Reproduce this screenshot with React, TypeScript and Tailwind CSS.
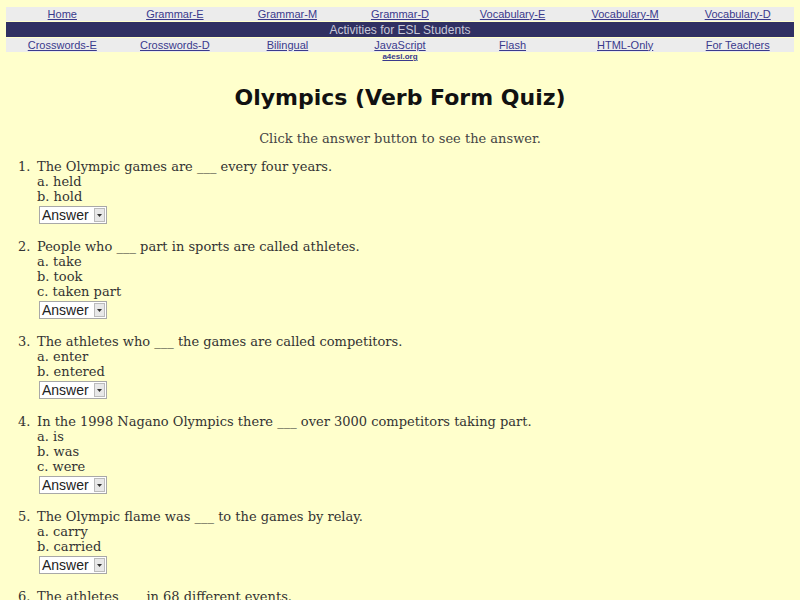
const topLinks = [
  "Home",
  "Grammar-E",
  "Grammar-M",
  "Grammar-D",
  "Vocabulary-E",
  "Vocabulary-M",
  "Vocabulary-D",
];

const bottomLinks = [
  "Crosswords-E",
  "Crosswords-D",
  "Bilingual",
  "JavaScript",
  "Flash",
  "HTML-Only",
  "For Teachers",
];

const questions = [
  { q: "The Olympic games are ___ every four years.", a: ["held", "hold"] },
  {
    q: "People who ___ part in sports are called athletes.",
    a: ["take", "took", "taken part"],
  },
  { q: "The athletes who ___ the games are called competitors.", a: ["enter", "entered"] },
  {
    q: "In the 1998 Nagano Olympics there ___ over 3000 competitors taking part.",
    a: ["is", "was", "were"],
  },
  { q: "The Olympic flame was ___ to the games by relay.", a: ["carry", "carried"] },
  { q: "The athletes ___ in 68 different events.", a: ["compete", "competed"] },
];

const letters = ["a", "b", "c", "d"];

const AnswerSelect = () => (
  <div className="flex h-[18px] w-[68px] items-center border border-[#a8a8a8] bg-white pl-[2px] text-[14px] leading-none text-[#222] [font-family:'Liberation_Sans',Arial,sans-serif]">
    <span className="flex-1">Answer</span>
    <span className="mr-[1px] flex h-[14px] w-[11px] items-center justify-center border border-[#bbb] bg-[#e8e8e8]">
      <svg width="5" height="3" viewBox="0 0 5 3">
        <path d="M0 0h5L2.5 3z" fill="#333" />
      </svg>
    </span>
  </div>
);

export default function App() {
  return (
    <div className="min-h-screen bg-[#ffffcc] pt-[7px] text-[#333] [font-family:'DejaVu_Serif',serif]">
      {/* Navigation */}
      <div className="mx-[6px] [font-family:'Liberation_Sans',Arial,sans-serif]">
        <div className="grid h-[14px] grid-cols-7 items-center bg-[#ececec]">
          {topLinks.map((l) => (
            <a key={l} className="text-center text-[11px] leading-none text-[#3a3a8c] underline">
              {l}
            </a>
          ))}
        </div>
        <div className="mt-[1px] flex h-[15px] items-center justify-center bg-[#303062] text-[12px] leading-none text-[#c8c8d8]">
          Activities for ESL Students
        </div>
        <div className="mt-[1px] grid h-[14px] grid-cols-7 items-center bg-[#ececec]">
          {bottomLinks.map((l) => (
            <a key={l} className="text-center text-[11px] leading-none text-[#3a3a8c] underline">
              {l}
            </a>
          ))}
        </div>
        <div className="grid grid-cols-7">
          <div className="col-start-4 pt-[1px] text-center text-[8px] font-bold leading-none text-[#3a3a8c] underline">
            a4esl.org
          </div>
        </div>
      </div>

      {/* Title */}
      <h1 className="mt-[26px] text-center text-[22px] font-bold leading-none text-[#111] [font-family:'DejaVu_Sans',sans-serif]">
        Olympics (Verb Form Quiz)
      </h1>
      <p className="mt-[23px] text-center text-[13px] leading-none text-[#444]">
        Click the answer button to see the answer.
      </p>

      {/* Questions */}
      <ol className="mt-[14px] flex flex-col gap-[15px] pl-[18px] text-[13px] leading-[15px]">
        {questions.map((item, i) => (
          <li key={i} className="flex">
            <span className="w-[19px] shrink-0">{i + 1}.</span>
            <div>
              <div>{item.q}</div>
              {item.a.map((ans, j) => (
                <div key={j}>
                  {letters[j]}. {ans}
                </div>
              ))}
              <div className="mt-[2px] pl-[2px]">
                <AnswerSelect />
              </div>
            </div>
          </li>
        ))}
      </ol>
    </div>
  );
}
